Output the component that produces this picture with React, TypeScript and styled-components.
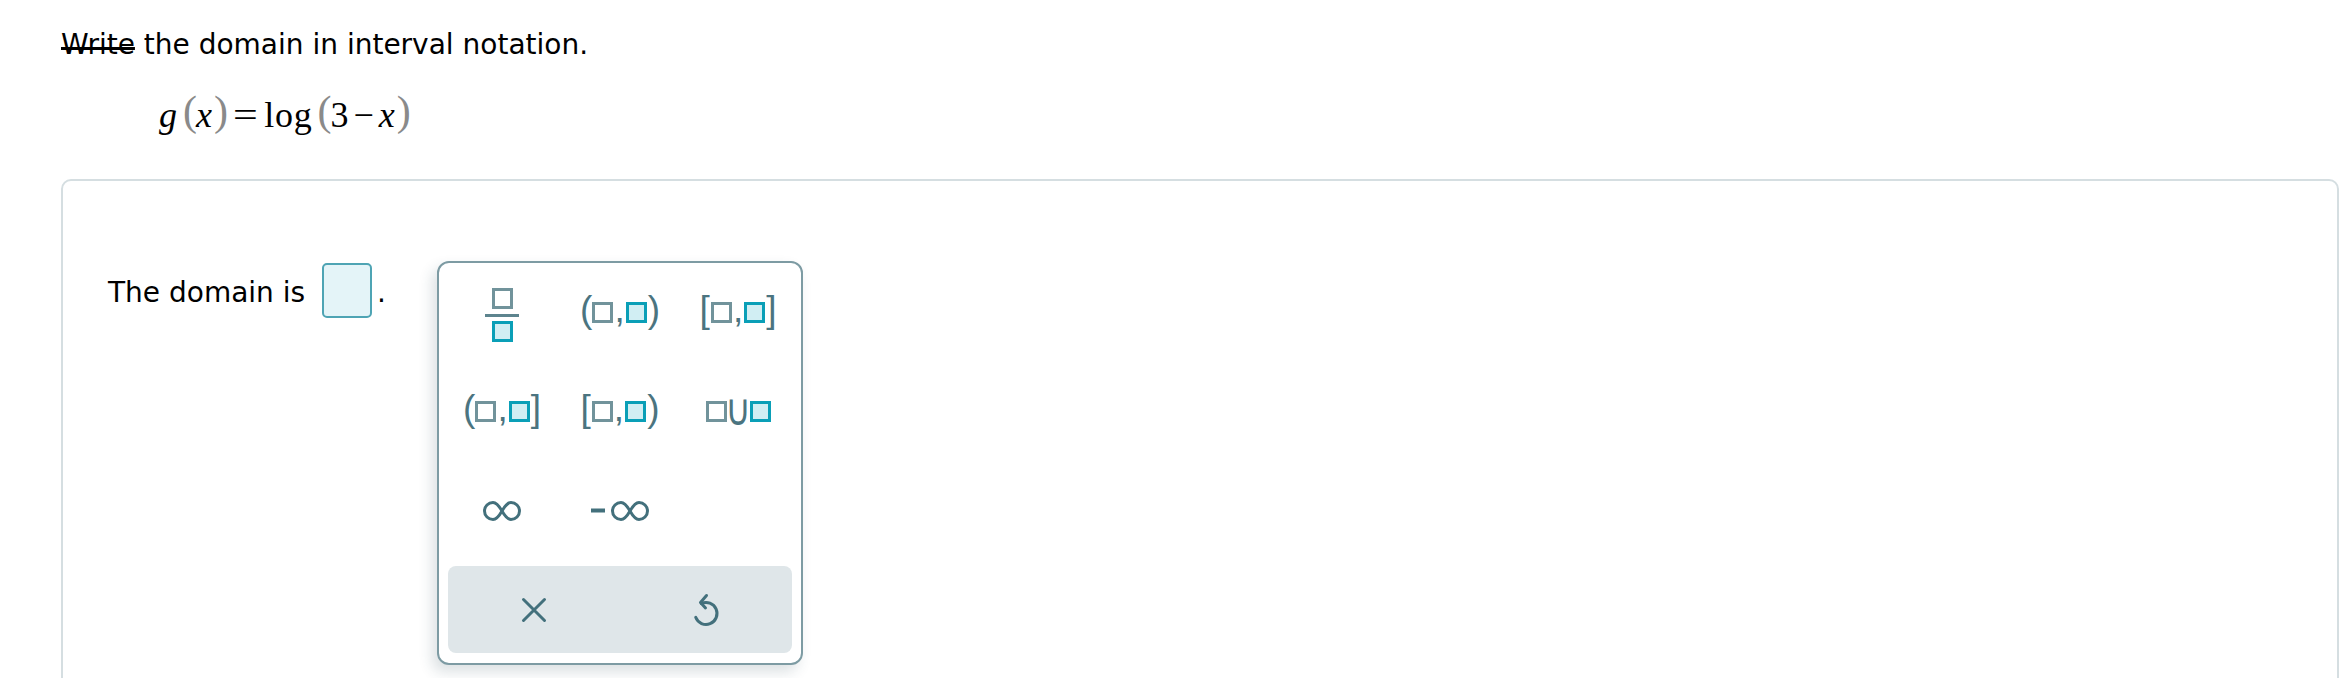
import React from "react";
import styled, { createGlobalStyle } from "styled-components";

const GlobalStyle = createGlobalStyle`
  html, body {
    margin: 0;
    padding: 0;
    background: #ffffff;
    overflow: hidden;
  }
  body {
    font-family: "DejaVu Sans", Verdana, sans-serif;
    color: #000000;
  }
`;

const Page = styled.main`
  padding: 29px 11px 0 61px;
`;

const Prompt = styled.p`
  margin: 0;
  font-size: 28px;
  line-height: 32px;
  white-space: nowrap;
`;

const Scribble = styled.span`
  text-decoration: underline;
  text-decoration-thickness: 3px;
  text-underline-offset: -7px;
  text-decoration-skip-ink: none;
`;

const Formula = styled.div`
  height: 44px;
  margin: 32px 0 0 98px;
  font-family: "Liberation Serif", "Times New Roman", serif;
  font-size: 36px;
  line-height: 44px;
  white-space: nowrap;
`;

const MathPiece = styled.span<{ $gap?: number; $italic?: boolean; $track?: number }>`
  display: inline-block;
  margin-left: ${(p) => p.$gap ?? 0}px;
  font-style: ${(p) => (p.$italic ? "italic" : "normal")};
  letter-spacing: ${(p) => p.$track ?? 0}px;
`;

const MathFence = styled.span<{ $gap?: number }>`
  display: inline-block;
  margin-left: ${(p) => p.$gap ?? 0}px;
  font-size: 42px;
  line-height: 30px;
  vertical-align: 2px;
  color: #8a8a8a;
`;

const MathOp = styled.span<{ $gap?: number; $scale: number }>`
  display: inline-block;
  margin-left: ${(p) => p.$gap ?? 0}px;
  transform: scaleX(${(p) => p.$scale});
  transform-origin: left center;
`;

const Card = styled.section`
  margin-top: 42px;
  min-height: 560px;
  border: 2px solid #d5dee1;
  border-radius: 10px;
  padding: 80px 0 0 45px;
`;

const AnswerRow = styled.div`
  display: flex;
  align-items: flex-start;
`;

const Statement = styled.div`
  display: flex;
  align-items: flex-start;
  font-size: 28px;
  line-height: 31px;
  white-space: nowrap;
`;

const StatementText = styled.span<{ $gap?: number }>`
  margin-top: 16px;
  margin-left: ${(p) => p.$gap ?? 0}px;
`;

const AnswerBox = styled.span`
  box-sizing: border-box;
  width: 50px;
  height: 55px;
  margin: 2px 0 0 17px;
  border: 2px solid #4ea4b4;
  border-radius: 5px;
  background: #e4f4f8;
`;

const Keypad = styled.div`
  box-sizing: border-box;
  width: 366px;
  height: 404px;
  margin-left: 51px;
  border: 2px solid #7d9ba3;
  border-radius: 12px;
  background: #ffffff;
  box-shadow: -5px 7px 14px rgba(40, 70, 80, 0.16);
  display: flex;
  flex-direction: column;
`;

const KeyGrid = styled.div`
  display: grid;
  grid-template-columns: repeat(3, 118px);
  grid-auto-rows: 99px;
  padding-left: 4px;
`;

const Key = styled.button`
  display: flex;
  align-items: center;
  justify-content: center;
  padding: 0;
  border: none;
  background: transparent;
  cursor: pointer;
`;

const KeyLabel = styled.span`
  display: flex;
  align-items: center;
`;

const Slot = styled.span<{ $filled?: boolean }>`
  box-sizing: border-box;
  width: 21px;
  height: 21px;
  border: 3px solid ${(p) => (p.$filled ? "#0a9fb7" : "#71939b")};
  background: ${(p) => (p.$filled ? "#d1eef3" : "transparent")};
`;

const Fence = styled.span<{ $ml?: number; $mr?: number }>`
  font-family: "Liberation Sans", Arial, sans-serif;
  font-size: 37px;
  line-height: 1;
  color: #4b7480;
  margin: 0 ${(p) => p.$mr ?? 0}px 6px ${(p) => p.$ml ?? 0}px;
`;

const UnionSign = styled.span`
  display: inline-flex;
  justify-content: center;
  width: 16px;
  margin: 0 4px 4px 3px;
  font-family: "DejaVu Sans", sans-serif;
  font-size: 44px;
  line-height: 1;
  color: #4b7480;
  transform: scaleX(0.8);
`;

const Fraction = styled.span`
  display: flex;
  flex-direction: column;
  align-items: center;
  margin-top: 5px;
`;

const FractionBar = styled.span`
  width: 34px;
  height: 3px;
  margin: 5px 0 4px;
  background: #5d848e;
`;

const ActionBar = styled.div`
  display: grid;
  grid-template-columns: 1fr 1fr;
  height: 87px;
  margin: 6px 9px 10px;
  border-radius: 8px;
  background: #dfe6e9;
`;

const ActionButton = styled.button`
  display: flex;
  align-items: center;
  justify-content: center;
  padding: 0;
  border: none;
  background: transparent;
  cursor: pointer;
`;

const ICON = "#43707c";

type Interval = { left: string; right: string };

const IntervalLabel = ({ left, right }: Interval) => (
  <KeyLabel>
    <Fence $mr={left === "[" ? 1 : 0}>{left}</Fence>
    <Slot />
    <Fence $ml={1} $mr={1}>,</Fence>
    <Slot $filled />
    <Fence $ml={1}>{right}</Fence>
  </KeyLabel>
);

const LOOP =
  "M19 10 C16.5 5.6 14 1.5 10 1.5 C5.3 1.5 1.5 5.3 1.5 10 C1.5 14.7 5.3 18.5 10 18.5 C14 18.5 16.5 14.4 19 10 C21.5 5.6 24 1.5 28 1.5 C32.7 1.5 36.5 5.3 36.5 10 C36.5 14.7 32.7 18.5 28 18.5 C24 18.5 21.5 14.4 19 10 Z";

const InfinityIcon = ({ negative }: { negative?: boolean }) => {
  const off = negative ? 20 : 0;
  return (
    <svg
      width={38 + off}
      height={20}
      viewBox={`0 0 ${38 + off} 20`}
      role="img"
      aria-label={negative ? "negative infinity" : "infinity"}
    >
      {negative && <rect x={0} y={7.5} width={14} height={4} fill={ICON} />}
      <path d={LOOP} transform={`translate(${off} 0)`} fill="none" stroke={ICON} strokeWidth={3} />
    </svg>
  );
};

const CloseIcon = () => (
  <svg width={26} height={26} viewBox="0 0 26 26" aria-label="clear">
    <path
      d="M2.5 2.5 L23.5 23.5 M23.5 2.5 L2.5 23.5"
      stroke={ICON}
      strokeWidth={3}
      strokeLinecap="round"
      fill="none"
    />
  </svg>
);

const UndoIcon = () => (
  <svg width={28} height={36} viewBox="0 0 28 36" aria-label="undo">
    <path
      d="M9.4 11.5 A11 11 0 1 1 3.7 25.3"
      stroke={ICON}
      strokeWidth={3}
      strokeLinecap="round"
      fill="none"
    />
    <path
      d="M14.5 3.5 L8.5 10.5 L13.5 16"
      stroke={ICON}
      strokeWidth={3}
      strokeLinecap="round"
      strokeLinejoin="round"
      fill="none"
    />
  </svg>
);

const intervals: Interval[] = [
  { left: "(", right: ")" },
  { left: "[", right: "]" },
  { left: "(", right: "]" },
  { left: "[", right: ")" },
];

export default function App() {
  return (
    <>
      <GlobalStyle />
      <Page>
        <Prompt>
          <Scribble>Write</Scribble> the domain in interval notation.
        </Prompt>
        <Formula>
          <MathPiece $italic>g</MathPiece>
          <MathFence $gap={6}>(</MathFence>
          <MathPiece $italic $gap={-1}>x</MathPiece>
          <MathFence $gap={2}>)</MathFence>
          <MathOp $gap={5} $scale={1.22}>=</MathOp>
          <MathPiece $gap={11} $track={0.7}>log</MathPiece>
          <MathFence $gap={5}>(</MathFence>
          <MathPiece $gap={-1}>3</MathPiece>
          <MathOp $gap={5} $scale={1}>−</MathOp>
          <MathPiece $italic $gap={5}>x</MathPiece>
          <MathFence $gap={2}>)</MathFence>
        </Formula>
        <Card>
          <AnswerRow>
            <Statement>
              <StatementText>The domain is</StatementText>
              <AnswerBox />
              <StatementText $gap={5}>.</StatementText>
            </Statement>
            <Keypad>
              <KeyGrid>
                <Key aria-label="fraction">
                  <Fraction>
                    <Slot />
                    <FractionBar />
                    <Slot $filled />
                  </Fraction>
                </Key>
                {intervals.map((iv, i) => (
                  <Key key={i} aria-label={`${iv.left} , ${iv.right}`}>
                    <IntervalLabel {...iv} />
                  </Key>
                ))}
                <Key aria-label="union">
                  <KeyLabel>
                    <Slot />
                    <UnionSign>∪</UnionSign>
                    <Slot $filled />
                  </KeyLabel>
                </Key>
                <Key aria-label="infinity">
                  <InfinityIcon />
                </Key>
                <Key aria-label="negative infinity">
                  <InfinityIcon negative />
                </Key>
              </KeyGrid>
              <ActionBar>
                <ActionButton aria-label="clear">
                  <CloseIcon />
                </ActionButton>
                <ActionButton aria-label="undo">
                  <UndoIcon />
                </ActionButton>
              </ActionBar>
            </Keypad>
          </AnswerRow>
        </Card>
      </Page>
    </>
  );
}
